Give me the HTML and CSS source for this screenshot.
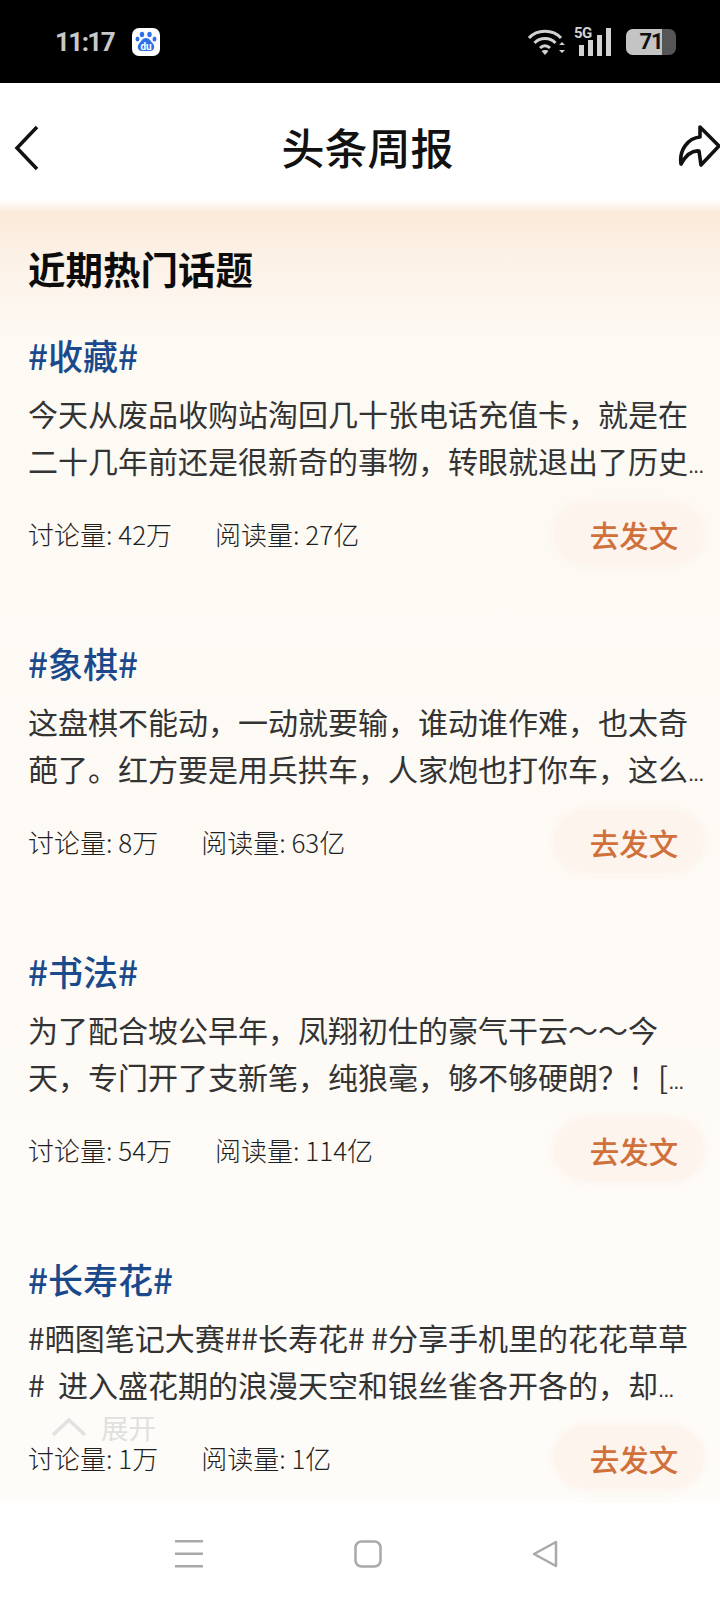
FILE: index.html
```html
<!DOCTYPE html>
<html lang="zh-CN">
<head>
  <meta charset="UTF-8">
  <meta name="viewport" content="width=device-width, initial-scale=1.0">
  <title>头条周报</title>
  <link rel="stylesheet" href="styles.css">
</head>
<body>

  <!-- 状态栏 -->
  <div class="status-bar">
    <div class="status-left">
      <span class="time">11:17</span>
      <svg class="baidu-icon" width="28" height="28" viewBox="0 0 28 28">
        <rect width="28" height="28" rx="7" fill="#fff"/>
        <ellipse cx="10" cy="6.5" rx="2.2" ry="2.8" fill="#2f6fe8"/>
        <ellipse cx="17.5" cy="6.5" rx="2.2" ry="2.8" fill="#2f6fe8"/>
        <ellipse cx="5.5" cy="11" rx="2" ry="2.6" fill="#2f6fe8"/>
        <ellipse cx="22.5" cy="11" rx="2" ry="2.6" fill="#2f6fe8"/>
        <path d="M14 10 C10.5 10 9.5 13 7.5 15 C4.5 18 5.5 23 10 23 L18 23 C22.5 23 23.5 18 20.5 15 C18.5 13 17.5 10 14 10 Z" fill="#2f6fe8"/>
        <text x="14" y="21.5" text-anchor="middle" class="baidu-du">du</text>
      </svg>
    </div>
    <div class="status-right">
      <svg width="42" height="30" viewBox="0 0 40 30" fill="none" stroke="#d2d2d2" stroke-width="3">
        <path d="M2 11 C10 2 26 2 34 11"/>
        <path d="M7.5 16 C13 10 23 10 28.5 16"/>
        <path d="M13 21 C16 18 20 18 23 21"/>
        <path d="M14.5 24 L18 28 L21.5 24 C20 22.5 16 22.5 14.5 24 Z" fill="#d2d2d2" stroke="none"/>
        <path d="M32 18 L35 15 L38 18 Z M32 23 L38 23 L35 26 Z" fill="#d2d2d2" stroke="none"/>
      </svg>
      <div class="signal">
        <span class="signal-label">5G</span>
        <svg width="38" height="28" viewBox="0 0 38 28" fill="#d2d2d2">
          <rect x="5" y="17" width="5" height="11"/>
          <rect x="14" y="12" width="5" height="16"/>
          <rect x="23" y="7" width="5" height="21"/>
          <rect x="32" y="0" width="5" height="28"/>
        </svg>
      </div>
      <div class="battery">
        <div class="battery-fill"></div>
        <span class="battery-num">71</span>
      </div>
    </div>
  </div>

  <!-- 标题栏 -->
  <div class="top-bar">
    <svg class="back-icon" width="28" height="46" viewBox="0 0 28 46" fill="none" stroke="#111" stroke-width="3.5">
      <path d="M24 2 L4 23 L24 44"/>
    </svg>
    <h1>头条周报</h1>
    <svg class="share-icon" width="44" height="44" viewBox="0 0 44 44" fill="none" stroke="#111" stroke-width="3.6" stroke-linejoin="round">
      <path d="M5 40 C3 26 12 14 24 13 L24 3 L43 22 L25 41 L23 27 C15 26 9 33 5 40 Z"/>
    </svg>
  </div>

  <div class="content">
    <h2>近期热门话题</h2>

    <div class="topic">
      <div class="topic-title">#收藏#</div>
      <div class="topic-text">
        <div class="line">今天从废品收购站淘回几十张电话充值卡，就是在</div>
        <div class="line">二十几年前还是很新奇的事物，转眼就退出了历史<span class="dots">...</span></div>
      </div>
      <div class="topic-meta">
        <div class="stats"><span>讨论量: 42万</span><span>阅读量: 27亿</span></div>
        <a class="post-btn">去发文</a>
      </div>
    </div>

    <div class="topic">
      <div class="topic-title">#象棋#</div>
      <div class="topic-text">
        <div class="line">这盘棋不能动，一动就要输，谁动谁作难，也太奇</div>
        <div class="line">葩了。红方要是用兵拱车，人家炮也打你车，这么<span class="dots">...</span></div>
      </div>
      <div class="topic-meta">
        <div class="stats"><span>讨论量: 8万</span><span>阅读量: 63亿</span></div>
        <a class="post-btn">去发文</a>
      </div>
    </div>

    <div class="topic">
      <div class="topic-title">#书法#</div>
      <div class="topic-text">
        <div class="line">为了配合坡公早年，凤翔初仕的豪气干云～～今</div>
        <div class="line">天，专门开了支新笔，纯狼毫，够不够硬朗？！[<span class="dots">...</span></div>
      </div>
      <div class="topic-meta">
        <div class="stats"><span>讨论量: 54万</span><span>阅读量: 114亿</span></div>
        <a class="post-btn">去发文</a>
      </div>
    </div>

    <div class="topic">
      <div class="topic-title">#长寿花#</div>
      <div class="topic-text">
        <div class="line">#晒图笔记大赛##长寿花# #分享手机里的花花草草</div>
        <div class="line">#&nbsp; 进入盛花期的浪漫天空和银丝雀各开各的，却<span class="dots">...</span></div>
      </div>
      <div class="topic-meta">
        <div class="stats"><span>讨论量: 1万</span><span>阅读量: 1亿</span></div>
        <a class="post-btn">去发文</a>
      </div>
    </div>

    <!-- 浮在内容上面的展开按钮 -->
    <div class="expand">
      <svg width="36" height="20" viewBox="0 0 36 20" fill="none" stroke="#e2e2e0" stroke-width="3.5">
        <path d="M2 18 L18 3 L34 18"/>
      </svg>
      <span>展开</span>
    </div>
  </div>

  <!-- 底部导航 -->
  <div class="nav-bar">
    <svg width="30" height="28" viewBox="0 0 30 28" fill="#a9a9a9">
      <rect x="0" y="0" width="28" height="2.5"/>
      <rect x="0" y="12.5" width="28" height="2.5"/>
      <rect x="0" y="25" width="28" height="2.5"/>
    </svg>
    <svg width="28" height="28" viewBox="0 0 28 28" fill="none" stroke="#a9a9a9" stroke-width="2.5">
      <rect x="1.5" y="1.5" width="25" height="25" rx="6"/>
    </svg>
    <svg width="28" height="28" viewBox="0 0 28 28" fill="none" stroke="#a9a9a9" stroke-width="2.5" stroke-linejoin="round">
      <path d="M25 2 L3 14 L25 26 Z"/>
    </svg>
  </div>

</body>
</html>
```

FILE: styles.css
```css
* {
  box-sizing: border-box;
  margin: 0;
  padding: 0;
}

body {
  width: 720px;
  height: 1604px;
  display: flex;
  flex-direction: column;
  font-family: "Noto Sans CJK SC", "Noto Sans", sans-serif;
  background-color: #fff;
  color: #111;
  overflow: hidden;
}

/* 状态栏 */
.status-bar {
  height: 83px;
  flex-shrink: 0;
  background-color: #000;
  display: flex;
  justify-content: space-between;
  align-items: center;
  padding: 0 44px 0 55px;
}

.status-left {
  display: flex;
  align-items: center;
  gap: 18px;
}

.time {
  font-family: Roboto, sans-serif;
  font-size: 26px;
  font-weight: 700;
  letter-spacing: -1.6px;
  color: #c8c8c8;
}

.baidu-du {
  font-family: Roboto, sans-serif;
  font-size: 10px;
  font-weight: 700;
  fill: #fff;
}

.status-right {
  display: flex;
  align-items: center;
  gap: 6px;
}

.signal {
  position: relative;
  width: 40px;
  height: 28px;
}

.signal-label {
  position: absolute;
  left: 0;
  top: -4px;
  font-family: Roboto, sans-serif;
  font-size: 15px;
  font-weight: 700;
  letter-spacing: -0.5px;
  color: #d2d2d2;
}

.battery {
  position: relative;
  width: 50px;
  height: 26px;
  margin-left: 6px;
  border-radius: 7px;
  background-color: #555;
  overflow: hidden;
  text-align: center;
}

.battery-fill {
  position: absolute;
  left: 0;
  top: 0;
  bottom: 0;
  width: 36px;
  background-color: #c4c4c4;
}

.battery-num {
  position: relative;
  font-family: Roboto, sans-serif;
  font-size: 22px;
  font-weight: 700;
  line-height: 26px;
  letter-spacing: -1px;
  color: #111;
}

/* 标题栏 */
.top-bar {
  height: 117px;
  flex-shrink: 0;
  display: flex;
  justify-content: space-between;
  align-items: center;
  padding: 8px 0 0 13px;
}

.back-icon {
  margin-top: 4px;
}

.top-bar h1 {
  margin-left: 18px;
  font-size: 43px;
  font-weight: 500;
  color: #111;
}

/* 内容区 */
.content {
  position: relative;
  flex: 1;
  min-height: 0;
  padding: 44px 16px 0 28px;
  background: linear-gradient(180deg, #fff 0, #fbead9 12px, #fcf1e6 55px, #fdf9f3 135px, #fefcf9 100%);
}

.content h2 {
  font-size: 37.5px;
  font-weight: 700;
  line-height: 48px;
  color: #0c0c0c;
  margin-bottom: 41px;
}

.topic {
  margin-bottom: 76px;
}

.topic:last-of-type {
  margin-bottom: 0;
}

.topic-title {
  font-size: 35px;
  font-weight: 500;
  line-height: 44px;
  color: #1b4a8c;
}

.topic-text {
  margin-top: 13px;
  font-size: 30px;
  color: #333;
  white-space: nowrap;
}

.line {
  height: 47px;
  line-height: 47px;
}

.dots {
  font-family: "Liberation Sans", sans-serif;
  font-size: 22px;
  letter-spacing: -1px;
}

.topic-meta {
  margin-top: 18px;
  height: 63px;
  display: flex;
  justify-content: space-between;
  align-items: center;
}

.stats {
  display: flex;
  gap: 43px;
  font-size: 26px;
  font-weight: 300;
  color: #1f1f1f;
}

.post-btn {
  width: 150px;
  height: 63px;
  display: flex;
  justify-content: center;
  align-items: center;
  padding-left: 10px;
  font-size: 29.5px;
  font-weight: 500;
  color: #d0703a;
  background-color: #fdf4ee;
  border-radius: 32px;
  box-shadow: 0 0 12px 2px #fdf4ee;
}

.expand {
  position: absolute;
  left: 51px;
  top: 1212px;
  display: flex;
  align-items: center;
  gap: 14px;
  font-size: 27.5px;
  line-height: 30px;
  color: #e0e0de;
}

/* 底部导航 */
.nav-bar {
  height: 101px;
  flex-shrink: 0;
  display: flex;
  justify-content: center;
  align-items: flex-start;
  gap: 149px;
  padding: 37px 0 0 14px;
  background-color: #fff;
}
```
